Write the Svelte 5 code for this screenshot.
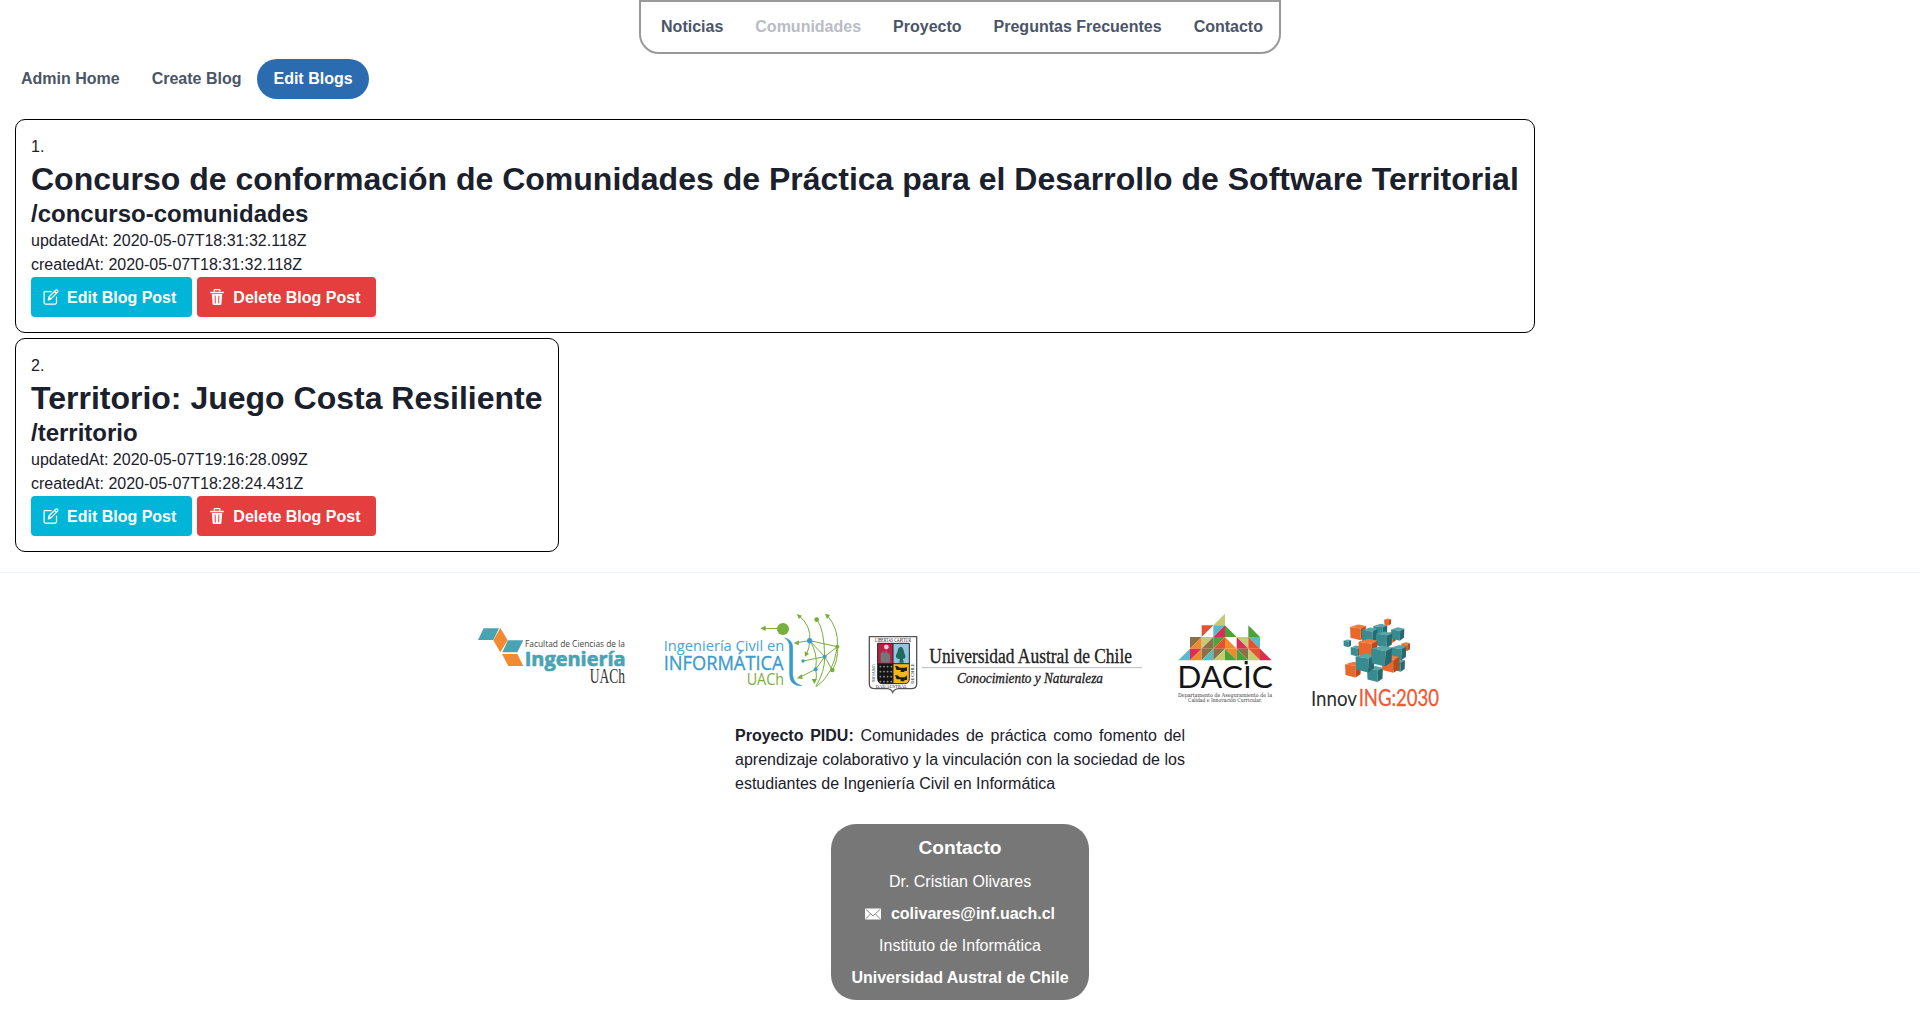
<script>
  const links = ['Noticias', 'Comunidades', 'Proyecto', 'Preguntas Frecuentes', 'Contacto'];
  const posts = [
    {
      title: 'Concurso de conformación de Comunidades de Práctica para el Desarrollo de Software Territorial',
      slug: '/concurso-comunidades',
      updatedAt: '2020-05-07T18:31:32.118Z',
      createdAt: '2020-05-07T18:31:32.118Z'
    },
    {
      title: 'Territorio: Juego Costa Resiliente',
      slug: '/territorio',
      updatedAt: '2020-05-07T19:16:28.099Z',
      createdAt: '2020-05-07T18:28:24.431Z'
    }
  ];

  // Mosaic triangles: column, row, corner that is filled, colour
  const tiles = [
    [3, 0, 'br', '#c4ca76'],
    [2, 1, 'tl', '#e3532f'], [3, 1, 'tl', '#58bcc8'], [3, 1, 'br', '#d92f55'], [4, 1, 'bl', '#4da13c'], [6, 1, 'bl', '#4da13c'],
    [1, 2, 'tl', '#8c7146'], [1, 2, 'br', '#f08a2c'], [2, 2, 'tl', '#c4ca76'], [2, 2, 'br', '#8c7146'],
    [3, 2, 'tl', '#4da13c'], [3, 2, 'br', '#e3532f'], [4, 2, 'bl', '#f08a2c'],
    [5, 2, 'tr', '#c4ca76'], [5, 2, 'bl', '#d92f55'], [6, 2, 'tr', '#58bcc8'], [6, 2, 'bl', '#e3532f'],
    [0, 3, 'br', '#58bcc8'], [1, 3, 'tl', '#d92f55'], [1, 3, 'br', '#f08a2c'], [2, 3, 'tl', '#8c7146'], [2, 3, 'br', '#58bcc8'],
    [3, 3, 'tl', '#8c7146'], [3, 3, 'br', '#c4ca76'], [4, 3, 'tr', '#f08a2c'], [4, 3, 'bl', '#4da13c'],
    [5, 3, 'tr', '#8c7146'], [5, 3, 'bl', '#4da13c'], [6, 3, 'tr', '#e3532f'], [6, 3, 'bl', '#c4ca76'], [7, 3, 'bl', '#d92f55']
  ];
  function tilePoints([c, r, corner]) {
    const x = 25 + c * 35;
    const y = 26 + r * 35;
    const p = { tl: [x, y], tr: [x + 35, y], br: [x + 35, y + 35], bl: [x, y + 35] };
    const order = { tl: ['bl', 'tl', 'tr'], br: ['bl', 'br', 'tr'], bl: ['tl', 'bl', 'br'], tr: ['tl', 'tr', 'br'] };
    return order[corner].map((k) => p[k].join(',')).join(' ');
  }

  // Cubes, back to front: centre x, centre y, half width, orange or teal
  const cubes = [
    [263, 51, 11, 'o'], [272, 97, 17, 'o'], [241, 77, 22, 't'], [293, 87, 21, 't'], [142, 115, 12, 't'],
    [174, 82, 25, 'o'], [168, 138, 17, 't'], [209, 91, 25, 't'], [252, 104, 26, 't'], [317, 125, 14, 'o'],
    [296, 181, 20, 't'], [159, 194, 25, 'o'], [225, 207, 25, 't'], [296, 143, 24, 't'], [204, 130, 30, 'o'],
    [195, 174, 30, 't'], [272, 177, 28, 'o'], [245, 153, 33, 't']
  ];
  const shades = { o: ['#f1783c', '#ea672c', '#b94a1c'], t: ['#55a7aa', '#388b8f', '#266a70'] };
  function faces([x, y, s]) {
    const pts = (list) => list.map(([a, b]) => `${x + a * s},${y + b * s}`).join(' ');
    return [
      pts([[-0.95, -0.65], [0.05, -0.95], [0.95, -0.75], [0.35, -0.45]]),
      pts([[-0.95, -0.65], [0.35, -0.45], [0.3, 0.95], [-0.9, 0.65]]),
      pts([[0.35, -0.45], [0.95, -0.75], [0.9, 0.55], [0.3, 0.95]])
    ];
  }
  const stars = [0, 1, 2, 3].flatMap((r) => [0, 1, 2, 3].map((c) => [61 + c * 11, 125 + r * 15]));
</script>

<header>
  <nav class="main-nav">
    {#each links as link}
      <a href="#top" class:current={link === 'Comunidades'}>{link}</a>
    {/each}
  </nav>
</header>

<nav class="admin-nav">
  <a href="#top">Admin Home</a>
  <a href="#top">Create Blog</a>
  <a href="#top" class="active">Edit Blogs</a>
</nav>

<main>
  {#each posts as post, i}
    <article>
      <p>{i + 1}.</p>
      <h1>{post.title}</h1>
      <h2>{post.slug}</h2>
      <p>updatedAt: {post.updatedAt}</p>
      <p>createdAt: {post.createdAt}</p>
      <div class="actions">
        <button class="edit">
          <svg width="16" height="16" viewBox="0 0 16 16" fill="none" stroke="currentColor" stroke-width="1.25" stroke-linejoin="round" stroke-linecap="round">
            <path d="M8.2 2.5H2.3Q1.1 2.5 1.1 3.7v10.1q0 1.2 1.2 1.2h10q1.2 0 1.2-1.2V8.2" />
            <path d="M5.3 11l.8-3.2 6.6-6.6q.8-.7 1.7.1.9.9.2 1.8L8 9.9zM11.5 2.5l1.9 1.9M6.1 8.2L8 9.9" />
          </svg>
          <span>Edit Blog Post</span>
        </button>
        <button class="delete">
          <svg width="16" height="16" viewBox="0 0 16 16">
            <path d="M5.2 2.6V1.1q0-.6.6-.6h4.4q.6 0 .6.6v1.5M1.2 3.5h13.6" fill="none" stroke="currentColor" stroke-width="1.3" />
            <path d="M2.8 5.1h10.4l-.8 10q-.1.9-1 .9H4.6q-.9 0-1-.9z" fill="currentColor" />
            <path d="M6.1 6.6l.2 7.8M9.9 6.6l-.2 7.8" fill="none" stroke="#e53e3e" stroke-width="1" />
          </svg>
          <span>Delete Blog Post</span>
        </button>
      </div>
    </article>
  {/each}
</main>

<footer>
  <div class="logos">
    <svg width="185" height="110" viewBox="0 0 555 330">
      <g fill="#48a3b2"><path d="M41 70H87L70 105H24z" /><path d="M114 106H160L142 142H97z" /></g>
      <g fill="#f18a32"><path d="M91 69L113 106 91 142 70 106z" /><path d="M96 147H142L160 183H115z" /></g>
      <text class="open" x="165" y="126" font-size="27" fill="#444" textLength="300" lengthAdjust="spacingAndGlyphs">Facultad de Ciencias de la</text>
      <text class="open" x="164" y="183" font-size="60" font-weight="700" fill="#48a3b2" stroke="#48a3b2" stroke-width="2" textLength="303" lengthAdjust="spacingAndGlyphs">Ingeniería</text>
      <text class="serif" x="359" y="235" font-size="60" fill="#333" textLength="106" lengthAdjust="spacingAndGlyphs">UACh</text>
    </svg>

    <svg width="205" height="110" viewBox="0 0 615 330">
      <text class="open" x="26" y="138" font-size="46" fill="#4ba3d2" textLength="362" lengthAdjust="spacingAndGlyphs">Ingeniería Civil en</text>
      <text class="open" x="26" y="196" font-size="60" fill="#3c9bcd" stroke="#3c9bcd" textLength="360" lengthAdjust="spacingAndGlyphs">INFORMÁTICA</text>
      <text class="open" x="275" y="239" font-size="48" fill="#78ae3c" textLength="112" lengthAdjust="spacingAndGlyphs">UACh</text>
      <path d="M389 99Q413 104 413 128V208Q413 235 440 242Q404 243 404 208V130Q404 106 389 99" fill="#3c9bcd" stroke="#3c9bcd" stroke-width="2" />
      <g fill="none" stroke="#78ae3c" stroke-width="3">
        <path d="M384 71L322 70M431 31Q470 64 464 107Q464 130 454 148M464 107L424 113M485 44Q508 70 509 155Q510 200 482 245M516 30Q552 72 547 125Q550 167 532 195M547 125L509 155L444 168M464 107L509 155L532 195M509 155L482 193L431 218M464 107Q490 145 482 193Q488 220 478 232M464 107L547 125Q535 210 484 245" />
      </g>
      <g fill="#78ae3c">
        <circle cx="384" cy="72" r="18" /><circle cx="485" cy="44" r="7" /><circle cx="547" cy="125" r="6" /><circle cx="532" cy="195" r="7" />
        <path d="M316 70L332 62V78zM425 27L441 32 432 42zM510 26L525 30 516 42zM416 114L432 106 431 121zM450 155L449 139 462 146zM425 220L440 208 443 222zM478 237L470 222 486 222z" />
      </g>
      <g fill="#3c9bcd"><circle cx="464" cy="107" r="8" /><circle cx="509" cy="155" r="6" /><circle cx="482" cy="193" r="6" /><circle cx="444" cy="168" r="5" /></g>
    </svg>

    <svg width="310" height="110" viewBox="0 -60 930 330">
      <path d="M28 35H170V177Q170 191 154 191H115Q103 192 98 202Q94 192 82 191H44Q28 191 28 177z" fill="#fff" stroke="#555" stroke-width="4" />
      <rect x="53" y="55" width="46" height="61" fill="#bd1e43" />
      <rect x="99" y="55" width="49" height="61" fill="#93c4e4" />
      <path d="M53 116H99V176H67Q53 176 53 160z" fill="#151515" />
      <path d="M99 116H148V160Q148 175 134 175H99z" fill="#f2b51d" />
      <path d="M62 113V83H67V77H71V83H76V77H81V83H86V88H90V113z" fill="#77747a" />
      <circle cx="79" cy="66" r="6" fill="#f3c6d0" stroke="#fff" stroke-width="2" />
      <path d="M123 65C111 67 115 80 108 90Q106 102 119 102V110H113L120 113H132L128 102Q139 102 136 91C131 82 132 68 123 65z" fill="#206b5b" />
      {#each stars as [x, y]}
        <path d="M{x - 3} {y}h6M{x} {y - 3}v6" stroke="#ccc" stroke-width="1.5" />
      {/each}
      <g fill="#211e16"><path d="M105 123H112L119 128H134L141 126V138H134L132 141H122V135H110z" /><path d="M105 151H112L120 157H134L141 151V165H134L132 169H122V163H110z" /></g>
      <path d="M53 55H148V160Q148 176 134 176H67Q53 176 53 160zM99 55V176M53 116H148" fill="none" stroke="#222" stroke-width="3" />
      <text class="serif" x="45" y="51" font-size="16" fill="#222" textLength="108" lengthAdjust="spacingAndGlyphs">LIBERTAS CAPITUR</text>
      <text class="serif" transform="translate(36 118) rotate(90)" font-size="15" fill="#222" textLength="55" lengthAdjust="spacingAndGlyphs">UNIVERSI</text>
      <text class="serif" x="47" y="190" font-size="15" fill="#222" textLength="94" lengthAdjust="spacingAndGlyphs">DAD AUSTRAL</text>
      <text class="serif" transform="translate(162 176) rotate(-90)" font-size="15" fill="#222" textLength="60" lengthAdjust="spacingAndGlyphs">DE CHILE</text>
      <text class="serif" x="208" y="113" font-size="64" fill="#222" stroke="#222" textLength="608" lengthAdjust="spacingAndGlyphs">Universidad Austral de Chile</text>
      <path d="M185 128H846" stroke="#999" stroke-width="2" />
      <text class="serif" x="291" y="174" font-size="45" font-style="italic" fill="#222" stroke="#222" textLength="438" lengthAdjust="spacingAndGlyphs">Conocimiento y Naturaleza</text>
    </svg>

    <svg width="130" height="110" viewBox="0 0 390 330">
      {#each tiles as tile}
        <polygon points={tilePoints(tile)} fill={tile[3]} />
      {/each}
      <text class="lato" x="22" y="249" font-size="90" fill="#151515" textLength="287" lengthAdjust="spacingAndGlyphs">DACIC</text>
      <rect x="224" y="168" width="9" height="10" fill="#151515" />
      <text class="slab" x="24" y="275" font-size="17" fill="#333" textLength="282" lengthAdjust="spacingAndGlyphs">Departamento de Aseguramiento de la</text>
      <text class="slab" x="54" y="291" font-size="17" fill="#333" textLength="222" lengthAdjust="spacingAndGlyphs">Calidad e Innovación Curricular.</text>
    </svg>

    <svg width="150" height="110" viewBox="0 0 450 330">
      {#each cubes as cube}
        {#each faces(cube) as points, f}
          <polygon {points} fill={shades[cube[3]][f]} />
        {/each}
      {/each}
      <text class="lato" x="33" y="304" font-size="66" fill="#2b2b2b" textLength="138" lengthAdjust="spacingAndGlyphs">Innov</text>
      <text class="lato" x="176" y="304" font-size="68" fill="#ec5a35" stroke="#ec5a35" textLength="241" lengthAdjust="spacingAndGlyphs">ING:2030</text>
    </svg>
  </div>

  <p class="project"><strong>Proyecto PIDU:</strong> Comunidades de práctica como fomento del aprendizaje colaborativo y la vinculación con la sociedad de los estudiantes de Ingeniería Civil en Informática</p>

  <section class="contact">
    <h3>Contacto</h3>
    <p>Dr. Cristian Olivares</p>
    <p class="mail">
      <svg width="16" height="12" viewBox="0 0 16 12">
        <rect y=".5" width="16" height="11" rx=".7" fill="#fff" />
        <path d="M1 1.5L8 7.9 15 1.5M1 10.7L5.5 6M15 10.7L10.5 6" fill="none" stroke="#777" stroke-width=".9" />
      </svg>
      <strong>colivares@inf.uach.cl</strong>
    </p>
    <p>Instituto de Informática</p>
    <p><strong>Universidad Austral de Chile</strong></p>
  </section>
</footer>

<style>
  :global(body) {
    margin: 0;
    background: #fff;
    color: #1a202c;
    font: 16px/24px "Liberation Sans", Arial, sans-serif;
    overflow: hidden;
  }
  p, h1, h2, h3 { margin: 0; }
  a { color: #4a5568; font-weight: 700; text-decoration: none; padding: 8px 16px; }
  header { display: flex; justify-content: center; }
  .main-nav {
    display: flex;
    box-sizing: border-box;
    height: 54px;
    padding: 5px 0 5px 4px;
    border: 2px solid #999;
    border-radius: 0 0 20px 20px;
  }
  .main-nav .current { color: #b8bcc5; }
  .admin-nav { display: flex; padding: 5px 5px 20px; }
  .admin-nav .active { background: #2b6cb0; color: #fff; border-radius: 20px; }
  main {
    display: flex;
    flex-direction: column;
    align-items: flex-start;
    gap: 5px;
    padding: 0 15px 20px;
  }
  article { border: 1px solid #000; border-radius: 10px; padding: 15px; }
  h1 { font-size: 32px; line-height: 40px; white-space: nowrap; }
  h2 { font-size: 24px; line-height: 30px; }
  .actions { display: flex; gap: 5px; }
  button {
    display: flex;
    align-items: center;
    gap: 8px;
    height: 40px;
    padding: 0 16px 0 12px;
    border: 0;
    border-radius: 4px;
    color: #fff;
    font: inherit;
    font-weight: 700;
  }
  button span { padding-top: 2px; }
  .edit { background: #00b5d8; }
  .delete { background: #e53e3e; }
  footer {
    display: flex;
    flex-direction: column;
    align-items: center;
    border-top: 1px solid #edf2f7;
    padding-top: 32px;
  }
  .logos { display: flex; width: 980px; height: 110px; }
  .logos svg { flex: none; overflow: visible; }
  .open { font-family: "Open Sans", sans-serif; }
  .lato { font-family: Lato, sans-serif; }
  .serif { font-family: "Liberation Serif", serif; }
  .slab { font-family: "DejaVu Serif", serif; }
  .project { width: 450px; margin-top: 9px; text-align: justify; }
  .contact {
    display: flex;
    flex-direction: column;
    align-items: center;
    gap: 8px;
    box-sizing: border-box;
    width: 258px;
    height: 176px;
    margin-top: 28px;
    padding-top: 10px;
    border-radius: 25px;
    background: #777;
    color: #fff;
  }
  h3 { font-size: 19.2px; line-height: 28px; }
  .mail { display: flex; align-items: center; gap: 10px; }
</style>
